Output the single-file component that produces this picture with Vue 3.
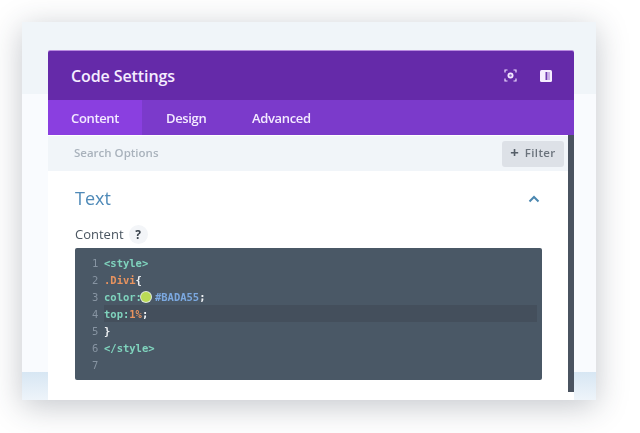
<template>
  <div class="page">
    <div class="window">
      <div class="band-top"></div>
      <div class="band-bottom"></div>
      <section class="modal">
        <header class="head">
          <h1>Code Settings</h1>
          <div class="head-icons">
            <svg width="13" height="13" viewBox="0 0 13 13" fill="none" stroke="#ecdcff" stroke-width="1.200">
              <path d="M1 3.500V1h2.500M9.500 1H12v2.500M12 9.500V12H9.500M3.500 12H1V9.500" />
              <circle cx="6.500" cy="6.500" r="3" fill="#f3e8ff" stroke="none" />
              <circle cx="6.500" cy="6.500" r="1.200" fill="#8d62c8" stroke="none" />
            </svg>
            <svg width="12" height="12" viewBox="0 0 12 12">
              <rect width="12" height="12" rx="1.500" fill="#f6eeff" />
              <rect x="5.500" y="2" width="2" height="8" fill="#6f3ab0" />
              <rect x="7.500" y="2" width="2.500" height="8" fill="#c9b0e6" />
            </svg>
          </div>
        </header>
        <nav class="tabs">
          <span class="tab active">Content</span>
          <span class="tab design">Design</span>
          <span class="tab">Advanced</span>
        </nav>
        <div class="panel">
          <div class="panel-main">
            <div class="search">
              <span class="search-text">Search Options</span>
              <button class="filter"><b>+</b> Filter</button>
            </div>
            <div class="group">
              <div class="group-head">
                <h2>Text</h2>
                <svg width="12" height="8" viewBox="0 0 12 8" fill="none" stroke="#4b87b0" stroke-width="2">
                  <path d="M1.500 6.500 6 2l4.500 4.500" />
                </svg>
              </div>
              <div class="label">Content <span class="help">?</span></div>
              <div class="code">
                <div v-for="(line, i) in lines" :key="i" class="line" :class="{ current: i === 3 }">
                  <span class="num">{{ i + 1 }}</span>
                  <span class="src"><span v-for="(part, j) in line" :key="j" :class="part[0]">{{ part[1] }}<i v-if="part[0] === 'dot'" class="swatch"></i></span></span>
                </div>
              </div>
            </div>
          </div>
          <div class="scrollbar"></div>
        </div>
      </section>
    </div>
  </div>
</template>

<script setup>
const lines = [
  [['tag', '<style>']],
  [['sel', '.Divi'], ['w', '{']],
  [['tag', 'color:'], ['dot', ''], ['val', '#BADA55'], ['w', ';']],
  [['tag', 'top:'], ['sel', '1%'], ['w', ';']],
  [['w', '}']],
  [['tag', '</style>']],
  [],
]
</script>

<style>
html, body { margin: 0; background: #fff; }
</style>

<style scoped>
.page {
  width: 640px;
  height: 433px;
  box-sizing: border-box;
  padding: 22px 44px 33px 22px;
  overflow: hidden;
  background: #fff;
  font-family: "Open Sans", "Noto Sans", sans-serif;
}
.window {
  position: relative;
  height: 378px;
  padding: 29px 22px 0 26px;
  box-sizing: border-box;
  background: #f9fbfe;
  box-shadow: 0 6px 30px rgba(40, 50, 70, 0.28);
}
.band-top {
  position: absolute;
  inset: 0 0 auto 0;
  height: 72px;
  background: #f0f5f9;
}
.band-bottom {
  position: absolute;
  inset: auto 0 0 0;
  height: 28px;
  background: linear-gradient(#d7e6f3, #eef4fa);
}
.modal {
  position: relative;
  height: 349px;
  display: flex;
  flex-direction: column;
  background: #fff;
  border-radius: 2px 2px 0 0;
  filter: blur(0.5px);
}
.head {
  height: 49px;
  flex: none;
  display: flex;
  align-items: center;
  justify-content: space-between;
  padding: 0 22px 0 23px;
  background: #652aa9;
  border-radius: 2px 2px 0 0;
  box-shadow: 0 -1px 0 #b98ae0;
  color: #f5edff;
}
h1 {
  margin: 0;
  font-size: 16px;
  font-weight: 600;
  letter-spacing: -0.1px;
}
.head-icons {
  display: flex;
  align-items: center;
  gap: 23px;
}
.tabs {
  height: 35px;
  flex: none;
  display: flex;
  align-items: center;
  background: #7b3acb;
  color: #f3eaff;
  font-size: 13px;
  font-weight: 600;
  letter-spacing: -0.35px;
}
.tab {
  height: 100%;
  display: flex;
  align-items: center;
}
.tab.active {
  width: 71px;
  padding-left: 23px;
  background: #8a3fe0;
}
.tab.design {
  width: 110px;
  padding-left: 24px;
  box-sizing: border-box;
}
.panel {
  flex: 1;
  min-height: 0;
  display: flex;
}
.panel-main {
  flex: 1;
  min-width: 0;
  padding-top: 1px;
}
.scrollbar {
  width: 6px;
  height: 257px;
  background: #4a5360;
}
.search {
  height: 35px;
  display: flex;
  align-items: center;
  justify-content: space-between;
  padding: 0 4px 0 26px;
  background: #f1f5f9;
  color: #a9b2bc;
  font-size: 11.500px;
  font-weight: 600;
}
.search-text {
  margin-top: -2px;
}
.filter {
  width: 62px;
  height: 26px;
  padding: 0 0 2px;
  border: 0;
  border-radius: 3px;
  background: #dde1e7;
  color: #6b737c;
  font: 600 11.500px "Open Sans", sans-serif;
  letter-spacing: 0.4px;
}
.filter b {
  font-size: 15px;
  font-weight: 700;
  line-height: 1;
  color: #555e68;
  vertical-align: -1px;
  margin-right: 2px;
}
.group {
  padding: 15px 26px 0 27px;
}
.group-head {
  height: 24px;
  display: flex;
  align-items: center;
  justify-content: space-between;
  padding-right: 2px;
}
.group-head svg {
  margin-top: 2px;
}
h2 {
  margin: 0;
  font-size: 18px;
  font-weight: 400;
  color: #4f8ab8;
}
.label {
  margin-top: 12px;
  height: 24px;
  display: flex;
  align-items: center;
  gap: 5px;
  color: #4a5560;
  font-size: 13px;
  font-weight: 400;
}
.help {
  width: 19px;
  height: 19px;
  border-radius: 50%;
  display: flex;
  align-items: center;
  justify-content: center;
  background: #f3f5f8;
  color: #39424c;
  font-size: 12px;
  font-weight: 700;
}
.code {
  height: 132px;
  margin-top: 2px;
  box-sizing: border-box;
  padding: 6px 5px 0 17px;
  background: #4a5866;
  border-radius: 2px;
  font-family: "DejaVu Sans Mono", "Liberation Mono", monospace;
  font-size: 10.500px;
  font-weight: 700;
}
.line {
  height: 17px;
  display: flex;
  align-items: center;
  gap: 6px;
  color: #f0f3f6;
  white-space: pre;
}
.line.current {
  background: linear-gradient(90deg, transparent 0, transparent 12px, #444f5c 12px);
}
.num {
  width: 6px;
  color: #8794a2;
  font-weight: 400;
}
.tag { color: #7fd3bd; }
.sel { color: #e8935f; }
.val { color: #7ba8e0; margin-left: 4px; }
.w { color: #f0f3f6; }
.swatch {
  display: inline-block;
  width: 10px;
  height: 10px;
  margin-left: -1px;
  border-radius: 50%;
  background: #bada55;
  box-shadow: 0 0 0 1px #dfe8d8;
  vertical-align: -1px;
}
</style>
